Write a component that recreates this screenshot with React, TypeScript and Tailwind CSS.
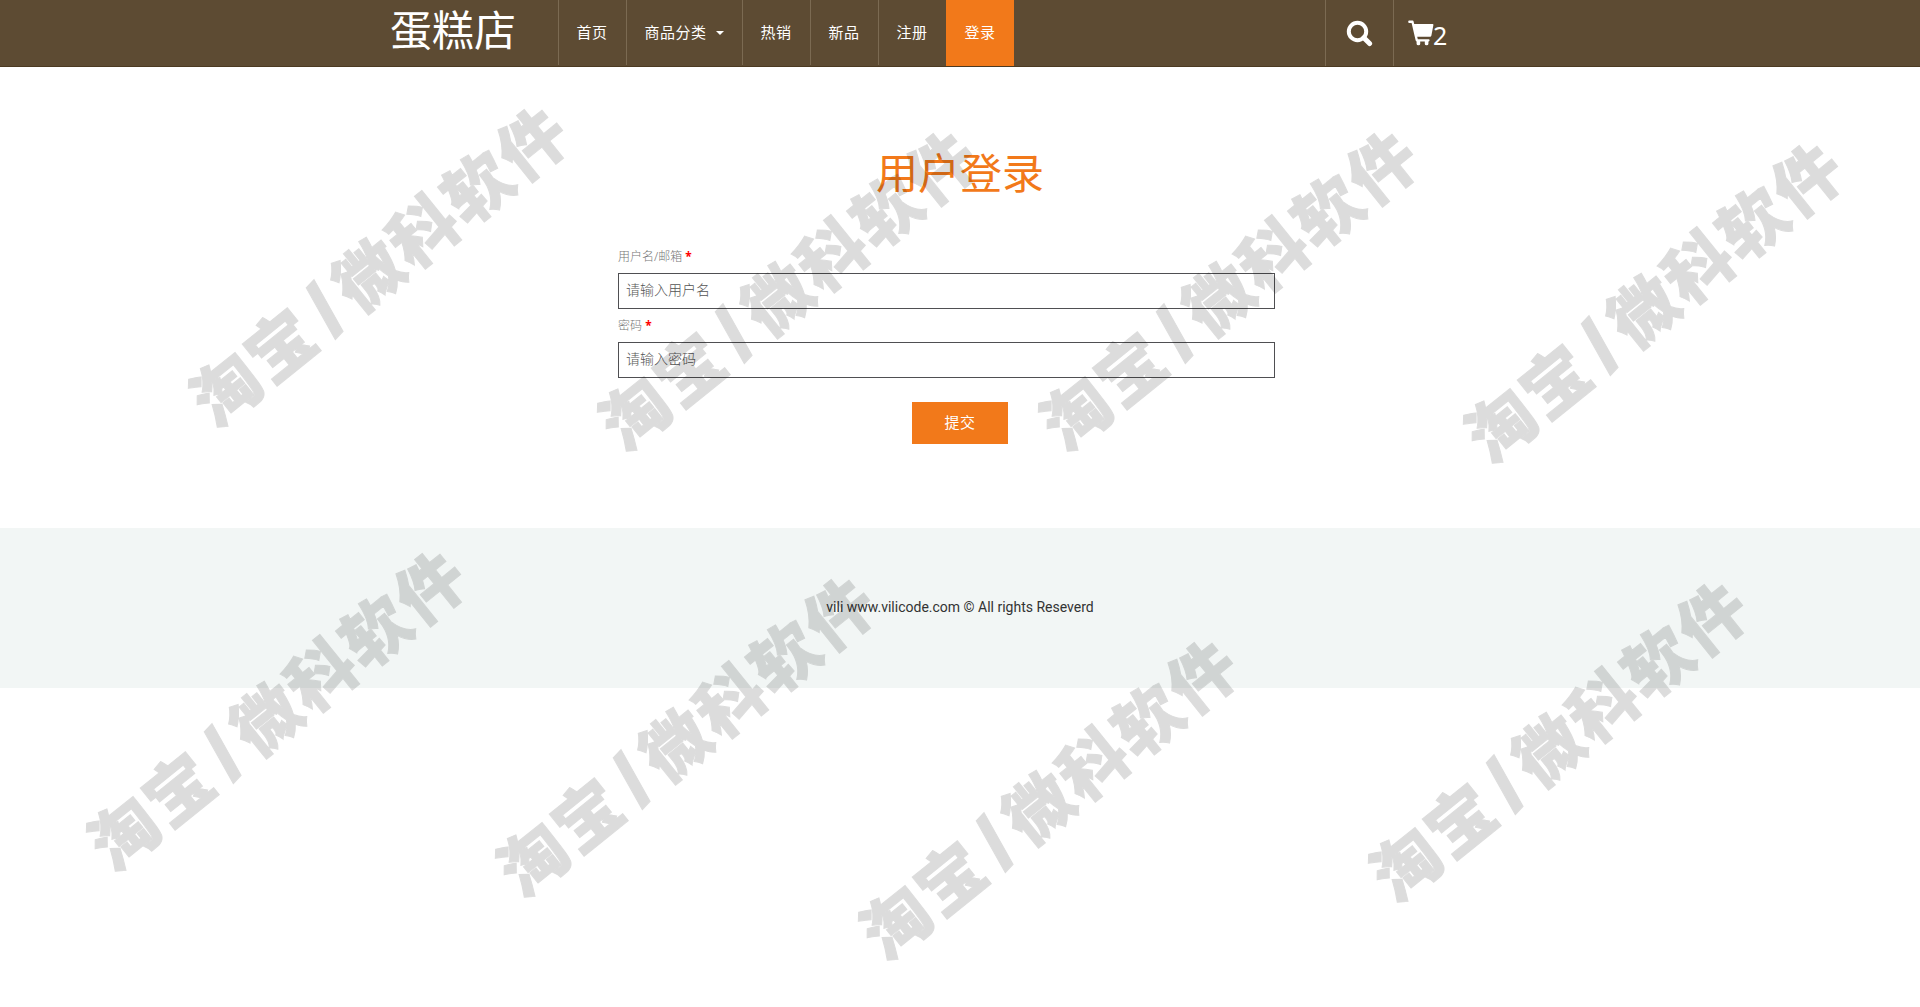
import React from 'react'

const navItems = [
  { label: '首页' },
  { label: '商品分类', dropdown: true },
  { label: '热销' },
  { label: '新品' },
  { label: '注册' },
  { label: '登录', active: true },
]

const fields = [
  { id: 'username', label: '用户名/邮箱', placeholder: '请输入用户名', type: 'text' },
  { id: 'password', label: '密码', placeholder: '请输入密码', type: 'password' },
]

// center points of the watermark stamps
const stamps = [
  { x: 380, y: 265 },
  { x: 789, y: 289 },
  { x: 1230, y: 289 },
  { x: 1655, y: 301 },
  { x: 278, y: 709 },
  { x: 687, y: 735 },
  { x: 1050, y: 798 },
  { x: 1560, y: 740 },
]

function SearchIcon() {
  return (
    <svg width="27" height="27" viewBox="0 0 27 27" fill="none" stroke="#fff">
      <circle cx="11.5" cy="11.5" r="8.7" strokeWidth="4" />
      <path d="M17.8 17.8L23.6 23.6" strokeWidth="5" strokeLinecap="round" />
    </svg>
  )
}

function CartIcon() {
  return (
    <svg width="26" height="26" viewBox="0 0 26 26" fill="#fff">
      <path d="M1.2 0.6H4.6Q5.4 0.6 5.6 1.4L6.2 4H24.6Q25.6 4 25.4 5L23.4 15.6Q23.2 16.8 22 16.8H9.2L9.8 19.2H20.6Q21.6 19.2 21.6 20.3Q21.6 21.4 20.6 21.4H20.4V24Q20.4 25.2 18.6 25.2Q16.8 25.2 16.8 24V21.4H12.2V24Q12.2 25.2 10.4 25.2Q8.6 25.2 8.6 24V21.4Q7.8 21.2 7.6 20.2L3.6 3H1.2Q0.2 3 0.2 1.8Q0.2 0.6 1.2 0.6Z" />
    </svg>
  )
}

function Header() {
  return (
    <header className="h-[67px] bg-[#5d4b33] border-b border-[#4c3a22] text-white">
      <div className="w-[1140px] mx-auto flex">
        <a href="#" className="w-[168px] h-[66px] text-[42px] leading-[60px] whitespace-nowrap">蛋糕店</a>
        <nav className="flex h-[66px]">
          {navItems.map((item) => (
            <a
              key={item.label}
              href="#"
              className={`flex items-center border-l pl-[17.5px] pr-[18.5px] pb-px text-[15px] tracking-[0.5px] whitespace-nowrap ${
                item.active ? 'h-[66px] bg-[#f2791a] border-[#f2791a]' : 'h-[65px] border-[#7b6a52]'
              }`}
            >
              {item.label}
              {item.dropdown && (
                <span className="ml-[9px] mt-0.5 border-x-4 border-t-4 border-x-transparent border-t-white"></span>
              )}
            </a>
          ))}
        </nav>
        <div className="ml-auto flex h-[66px]">
          <a href="#" className="w-[68px] border-l border-[#7b6a52] pl-5 pt-5">
            <SearchIcon />
          </a>
          <a href="#" className="w-[137px] border-l border-[#7b6a52] pl-[14px] pt-5 flex items-start">
            <CartIcon />
            <span className="text-[25px] leading-[31px] -ml-px">2</span>
          </a>
        </div>
      </div>
    </header>
  )
}

function LoginForm() {
  return (
    <main className="h-[461px] pt-[74px]">
      <h1 className="text-center text-[42px] leading-[63px] text-[#f2791a]">用户登录</h1>
      <form className="w-[684px] mx-auto pt-[42px]">
        {fields.map((field) => (
          <div key={field.id} className="h-[69px]">
            <label htmlFor={field.id} className="block h-[27px] text-xs leading-[22px] font-light text-[#777]">
              {field.label} <span className="text-[#f00] font-bold">*</span>
            </label>
            <input
              id={field.id}
              type={field.type}
              placeholder={field.placeholder}
              className="block w-[657px] h-9 border border-[#4f4f52] px-[7px] pb-[3px] text-sm font-light placeholder:text-[#555] placeholder:opacity-100"
            />
          </div>
        ))}
        <button type="button" className="block mx-auto mt-[18px] w-24 h-[42px] pb-0.5 bg-[#f2791a] text-white text-[15px] tracking-[0.5px]">
          提交
        </button>
      </form>
    </main>
  )
}

function Watermark() {
  return (
    <div className="absolute inset-0 overflow-hidden pointer-events-none">
      {stamps.map((s) => (
        <span
          key={`${s.x}-${s.y}`}
          className="absolute -translate-x-1/2 -translate-y-1/2 -rotate-[38.8deg] text-[67px] leading-none font-black tracking-[3px] whitespace-nowrap text-black opacity-[0.135] [-webkit-text-stroke:1px_black]"
          style={{ left: s.x, top: s.y }}
        >
          淘宝<span className="inline-block mx-[5px] -translate-y-0.5 -rotate-[8deg] scale-y-115">/</span>微科软件
        </span>
      ))}
    </div>
  )
}

export default function App() {
  return (
    <div className="relative h-[1007px] overflow-hidden bg-white font-['Noto_Sans','Noto_Sans_CJK_SC',sans-serif]">
      <Header />
      <LoginForm />
      <footer className="h-40 bg-[#f2f6f5] text-center font-['Roboto',sans-serif] text-sm leading-[158px] text-[#333]">
        vili www.vilicode.com © All rights Reseverd
      </footer>
      <Watermark />
    </div>
  )
}
